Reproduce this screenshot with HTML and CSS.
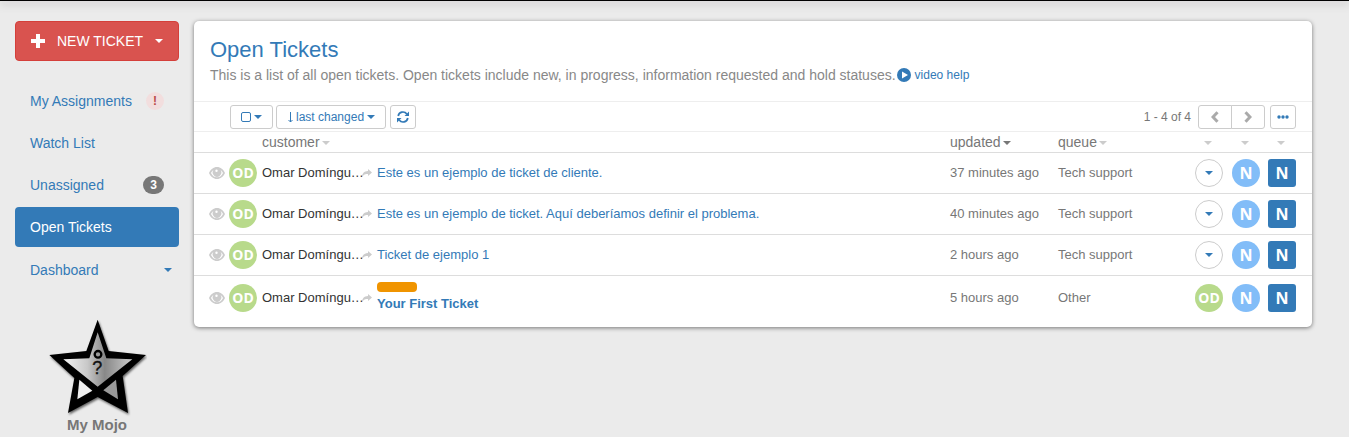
FILE: index.html
```
<!DOCTYPE html>
<html lang="en">
<head>
<meta charset="utf-8">
<title>Open Tickets</title>
<link rel="stylesheet" href="styles.css">
</head>
<body>
<svg class="defs" width="0" height="0" aria-hidden="true">
  <symbol id="eye" viewBox="0 0 16 12"><path fill-rule="evenodd" d="M8 0C4.500 0 1.500 2.500 0 6c1.500 3.500 4.500 6 8 6s6.500-2.500 8-6c-1.500-3.500-4.500-6-8-6zM8 10.200C5.200 10.200 3.200 8.800 2 6c.6-1.300 1.400-2.200 2.400-2.900A4.300 4.300 0 1 0 11.600 3.100C12.600 3.800 13.400 4.700 14 6 12.800 8.800 10.800 10.200 8 10.200zM7.500 2.500a1.200 1.200 0 0 1 0 2.400 1.200 1.200 0 0 1 0-2.400z"/></symbol>
  <symbol id="share" viewBox="0 0 10 8"><path d="M6 0l4 3.500L6 7V5C3.500 5 1.500 5.500 0 8 0 4.500 2 2.300 6 2z"/></symbol>
</svg>
<div class="topbar"></div>
<div class="layout">
  <aside class="sidebar">
    <button class="new-ticket" type="button">
      <svg width="14" height="14" viewBox="0 0 14 14" aria-hidden="true"><path fill="#fff" d="M5 0h4v5h5v4H9v5H5V9H0V5h5z"/></svg>
      <span>NEW TICKET</span><i class="caret"></i>
    </button>
    <nav class="nav">
      <a href="#">My Assignments <span class="badge alert">!</span></a>
      <a href="#">Watch List</a>
      <a href="#">Unassigned <span class="badge">3</span></a>
      <a href="#" class="active">Open Tickets</a>
      <a href="#" class="dash">Dashboard <i class="caret"></i></a>
    </nav>
    <div class="mojo">
      <svg width="100" height="100" viewBox="21 20 300 300" role="img" aria-label="Mojo star">
        <defs>
          <linearGradient id="metal" x1="0" y1="0" x2="1" y2="0"><stop offset="0" stop-color="#f4f4f4"/><stop offset=".35" stop-color="#c8c8c8"/><stop offset=".6" stop-color="#888"/><stop offset="1" stop-color="#ccc"/></linearGradient>
          <filter id="soft" x="-10%" y="-10%" width="120%" height="120%"><feDropShadow dx="3" dy="5" stdDeviation="3" flood-opacity=".6"/></filter>
        </defs>
        <path filter="url(#soft)" d="M173 28L206 122L318 134L248 197L264 308L173 260L84 308L103 203L28 134L139 122Z"/>
        <path fill="url(#metal)" d="M173 66L199 144L277 147L173 229L70 147L148 144Z"/>
        <path fill="#eee" d="M118 208L157 241L112 267Z"/>
        <path fill="#999" d="M228 208L190 240L234 267Z"/>
        <circle cx="174" cy="132" r="10" fill="#999" stroke="#000" stroke-width="7"/>
        <text class="mark" x="172" y="192" text-anchor="middle">?</text>
      </svg>
      <strong>My Mojo</strong>
    </div>
  </aside>
  <main class="card">
    <header class="head">
      <h1>Open Tickets</h1>
      <p>This is a list of all open tickets. Open tickets include new, in progress, information requested and hold statuses.<a href="#" class="video"><svg width="14" height="14" viewBox="0 0 14 14" aria-hidden="true"><circle cx="7" cy="7" r="7" fill="#337ab7"/><path fill="#fff" d="M5 3.500L11 7l-6 3.500z"/></svg>video help</a></p>
    </header>
    <div class="toolbar">
      <button class="btn pick" type="button" aria-label="Select tickets"><i class="box"></i><i class="caret"></i></button>
      <button class="btn sort" type="button"><svg width="6" height="12" viewBox="0 0 6 12" aria-hidden="true"><path fill="none" stroke="#337ab7" d="M3.500 1v10M1.500 9l2 2 2-2"/></svg>last changed<i class="caret"></i></button>
      <button class="btn icon" type="button" aria-label="Refresh"><svg width="12" height="12" viewBox="0 0 12 12" aria-hidden="true"><path fill="none" stroke="#337ab7" stroke-width="1.700" d="M1.200 5A4.800 4.800 0 0 1 9.800 3M10.800 7A4.800 4.800 0 0 1 2.200 9"/><path fill="#337ab7" d="M12 .5V5H7.500zM0 11.500V7h4.500z"/></svg></button>
      <span class="count">1 - 4 of 4</span>
      <div class="pager">
        <button class="btn" type="button" aria-label="Previous"><svg width="8" height="12" viewBox="0 0 8 12" aria-hidden="true"><path d="M6.500 1.200L2 6l4.500 4.800"/></svg></button>
        <button class="btn" type="button" aria-label="Next"><svg width="8" height="12" viewBox="0 0 8 12" aria-hidden="true"><path d="M1.500 1.200L6 6l-4.500 4.800"/></svg></button>
      </div>
      <button class="btn icon" type="button" aria-label="More"><svg width="12" height="4" viewBox="0 0 12 4" aria-hidden="true"><g fill="#337ab7"><circle cx="2" cy="2" r="1.700"/><circle cx="6" cy="2" r="1.700"/><circle cx="10" cy="2" r="1.700"/></g></svg></button>
    </div>
    <table class="tickets">
      <colgroup><col class="c-eye"><col class="c-avatar"><col class="c-name"><col class="c-share"><col><col class="c-updated"><col class="c-queue"><col class="c-agent"><col class="c-priority"><col class="c-state"></colgroup>
      <thead>
        <tr><th></th><th></th><th>customer<i class="caret"></i></th><th></th><th></th><th>updated<i class="caret on"></i></th><th>queue<i class="caret"></i></th><th class="mini"><i class="caret"></i></th><th class="mini"><i class="caret"></i></th><th class="mini"><i class="caret"></i></th></tr>
      </thead>
      <tbody>
        <tr><td class="eye"><svg width="16" height="12"><use href="#eye"/></svg></td><td><span class="avatar">OD</span></td><td class="name">Omar Domíngu…</td><td class="share"><svg width="10" height="8"><use href="#share"/></svg></td><td><a href="#">Este es un ejemplo de ticket de cliente.</a></td><td>37 minutes ago</td><td>Tech support</td><td><button class="assign" type="button" aria-label="Assign"><i class="caret"></i></button></td><td><span class="avatar priority">N</span></td><td><span class="avatar state">N</span></td></tr>
        <tr><td class="eye"><svg width="16" height="12"><use href="#eye"/></svg></td><td><span class="avatar">OD</span></td><td class="name">Omar Domíngu…</td><td class="share"><svg width="10" height="8"><use href="#share"/></svg></td><td><a href="#">Este es un ejemplo de ticket. Aquí deberíamos definir el problema.</a></td><td>40 minutes ago</td><td>Tech support</td><td><button class="assign" type="button" aria-label="Assign"><i class="caret"></i></button></td><td><span class="avatar priority">N</span></td><td><span class="avatar state">N</span></td></tr>
        <tr><td class="eye"><svg width="16" height="12"><use href="#eye"/></svg></td><td><span class="avatar">OD</span></td><td class="name">Omar Domíngu…</td><td class="share"><svg width="10" height="8"><use href="#share"/></svg></td><td><a href="#">Ticket de ejemplo 1</a></td><td>2 hours ago</td><td>Tech support</td><td><button class="assign" type="button" aria-label="Assign"><i class="caret"></i></button></td><td><span class="avatar priority">N</span></td><td><span class="avatar state">N</span></td></tr>
        <tr><td class="eye"><svg width="16" height="12"><use href="#eye"/></svg></td><td><span class="avatar">OD</span></td><td class="name">Omar Domíngu…</td><td class="share"><svg width="10" height="8"><use href="#share"/></svg></td><td><i class="tag"></i><a href="#" class="unread">Your First Ticket</a></td><td>5 hours ago</td><td>Other</td><td><span class="avatar">OD</span></td><td><span class="avatar priority">N</span></td><td><span class="avatar state">N</span></td></tr>
      </tbody>
    </table>
  </main>
</div>
</body>
</html>
```
FILE: styles.css
```
* { box-sizing: border-box; }
body {
  margin: 0;
  background: #ebebeb;
  color: #777;
  font: 14px/20px "Liberation Sans", Arial, sans-serif;
}
a { color: #337ab7; text-decoration: none; }
button { font: inherit; cursor: pointer; }
svg { display: block; flex: none; }
.defs { position: absolute; }
.topbar { height: 1px; background: #000; box-shadow: 0 1px 10px rgba(20, 0, 20, .7); }
.layout { display: flex; gap: 15px; padding: 20px 37px 0 15px; }
.sidebar { flex: none; width: 164px; }
.caret {
  display: inline-block;
  flex: none;
  width: 0;
  height: 0;
  border: 4px solid transparent;
  border-top-color: currentColor;
  border-bottom: 0;
  vertical-align: middle;
}
.new-ticket {
  display: flex;
  align-items: center;
  gap: 12px;
  width: 100%;
  height: 40px;
  padding: 0 15px;
  border: 1px solid #d43f3a;
  border-radius: 4px;
  background: #d9534f;
  color: #fff;
  white-space: nowrap;
}
.nav { display: flex; flex-direction: column; gap: 2px; padding-top: 20px; }
.nav a {
  display: flex;
  align-items: center;
  justify-content: space-between;
  padding: 10px 15px;
  border-radius: 4px;
}
.nav .active { background: #337ab7; color: #fff; }
.nav .dash { padding-right: 7px; margin-top: 1px; }
.badge {
  padding: 3px 7px;
  border-radius: 9px;
  background: #777;
  color: #fff;
  font: bold 12px/12px "Liberation Sans", Arial, sans-serif;
}
.badge.alert { background: #f2dede; color: #b94a48; }
.mojo { display: flex; flex-direction: column; align-items: center; margin-top: 27px; font-size: 15px; line-height: 16px; }
.mark { font: 54px "Liberation Sans", Arial, sans-serif; fill: #111; stroke: #111; stroke-width: 1; }
.card {
  flex: 1;
  min-width: 0;
  align-self: flex-start;
  padding-bottom: 8px;
  border-radius: 5px;
  background: #fff;
  box-shadow: 0 1px 4px rgba(0, 0, 0, .5);
}
.head { padding: 17px 16px 15px; }
h1 { margin: 0; color: #337ab7; font-size: 22px; font-weight: normal; line-height: 24px; }
.head p { display: flex; align-items: center; margin: 3px 0 0; padding-bottom: 1px; color: #888; }
.video { display: flex; align-items: center; gap: 4px; margin-left: 1px; font-size: 12px; }
.toolbar {
  display: flex;
  align-items: center;
  gap: 4px;
  height: 31px;
  padding: 0 16px 0 36px;
  border: solid #eee;
  border-width: 1px 0;
  font-size: 12px;
}
.btn {
  display: flex;
  align-items: center;
  justify-content: center;
  gap: 3px;
  height: 24px;
  padding: 0;
  border: 1px solid #ccc;
  border-radius: 3px;
  background: #fff;
  color: #337ab7;
}
.pick { width: 43px; }
.sort { padding: 0 10px; margin-left: -1px; }
.icon { width: 26px; }
.box { width: 10px; height: 10px; border: 1px solid #337ab7; border-radius: 2px; }
.count { margin-left: auto; }
.pager { display: flex; margin: 0 1px 0 3px; }
.pager .btn { width: 34px; }
.pager .btn + .btn { margin-left: -1px; border-radius: 0 3px 3px 0; }
.pager .btn:first-child { border-radius: 3px 0 0 3px; }
.pager path { fill: none; stroke: #aaa; stroke-width: 3; }
.tickets { width: 100%; border-collapse: separate; border-spacing: 0; table-layout: fixed; }
.c-eye { width: 35px; }
.c-avatar { width: 33px; }
.c-name { width: 99px; }
.c-share { width: 16px; }
.c-updated { width: 108px; }
.c-queue { width: 137px; }
.c-agent { width: 37px; }
.c-priority { width: 36px; }
.c-state { width: 44px; }
th { padding: 0; border-bottom: 1px solid #ddd; font-weight: normal; line-height: 20px; text-align: left; }
th .caret { margin-left: 2px; color: #ccc; }
th .caret.on { color: #777; }
.mini .caret { margin-left: 9px; }
td { padding: 6px 0; border-bottom: 1px solid #ddd; font-size: 13px; line-height: 18px; vertical-align: middle; white-space: nowrap; }
tr:last-child td { border-bottom: 0; }
td.eye { padding-left: 15px; }
.eye svg, .share svg { fill: #ccc; }
.share svg { margin-left: 1px; }
.name { color: #333; }
.avatar {
  display: block;
  width: 28px;
  border-radius: 50%;
  background: #b8da8b;
  color: #fff;
  font: bold 14px/28px "Open Sans", sans-serif;
  text-align: center;
}
.priority { background: #82bdf8; font-size: 16px; }
.state { border-radius: 3px; background: #337ab7; font-size: 16px; }
.assign { display: flex; align-items: center; justify-content: center; width: 28px; height: 28px; padding: 0; border: 1px solid #ccc; border-radius: 50%; background: #fff; color: #337ab7; }
.tag { display: block; width: 40px; height: 10px; margin: 0 0 3px; border-radius: 4px; background: #f09400; }
.unread { font-weight: bold; }
```
